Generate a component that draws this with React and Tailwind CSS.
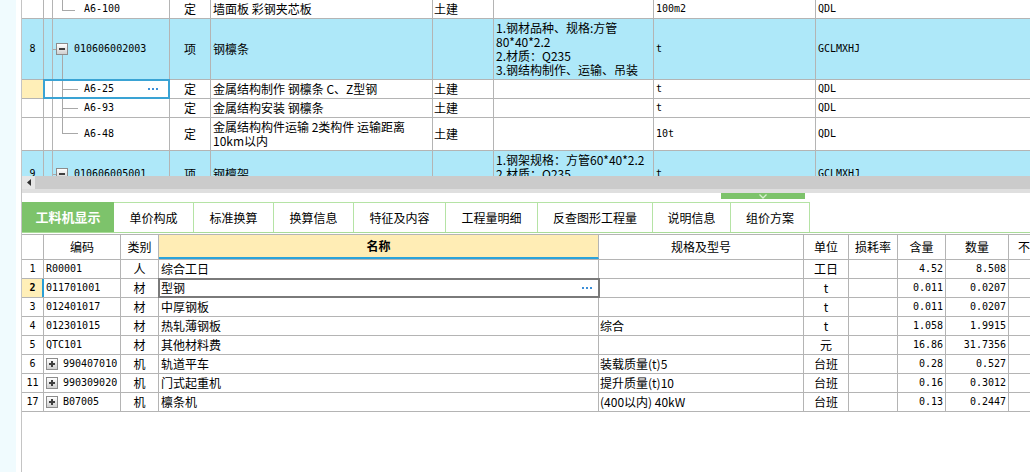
import React from "react";

const G = "border-[#b4b4b4]";
const M = "font-['DejaVu_Sans_Mono',monospace] text-[10px]";

function Dots() {
  return (
    <div className="flex gap-[2px]">
      <div className="w-[2px] h-[2px] bg-[#3c8fd8]" />
      <div className="w-[2px] h-[2px] bg-[#3c8fd8]" />
      <div className="w-[2px] h-[2px] bg-[#3c8fd8]" />
    </div>
  );
}

function Box({ plus, className }) {
  return (
    <div className={`absolute w-[12px] h-[12px] border border-[#8c8c8c] bg-gradient-to-b from-white to-[#d0d0d0] ${className}`}>
      <div className="absolute left-[2px] top-[4px] w-[6px] h-[2px] bg-[#404040]" />
      {plus && <div className="absolute left-[4px] top-[2px] w-[2px] h-[6px] bg-[#404040]" />}
    </div>
  );
}

function TopRow({ h, blue, num, numYellow, tree, type, name, prof, feat, unit, code, sel }) {
  const bg = blue ? "bg-[#aee8f9]" : "bg-white";
  return (
    <div className={`relative flex shrink-0 border-b ${G} ${h} ${bg}`}>
      <div className={`w-[22px] shrink-0 border-r ${G} flex items-center justify-center ${M} ${numYellow ? "bg-[#ffefb8]" : ""}`}>{num}</div>
      <div className={`w-[9px] shrink-0 border-r ${G}`} />
      <div className={`relative w-[117px] shrink-0 border-r ${G}`}>{tree}</div>
      <div className={`w-[41px] shrink-0 border-r ${G} flex items-center justify-center`}>{type}</div>
      <div className={`w-[222px] shrink-0 border-r ${G} flex items-center pl-[2px]`}>{name}</div>
      <div className={`w-[61px] shrink-0 border-r ${G} flex items-center pl-[1px]`}>{prof}</div>
      <div className={`w-[160px] shrink-0 border-r ${G} flex items-center pl-[2px]`}>{feat}</div>
      <div className={`w-[162px] shrink-0 border-r ${G} flex items-center pl-[2px] ${M}`}>{unit}</div>
      <div className={`flex-1 flex items-center pl-[2px] ${M}`}>{code}</div>
      {sel && (
        <div className="absolute left-[21px] top-[-1px] w-[127px] h-[20px] border-2 border-[#3aa3d4] flex items-center justify-end pr-[10px]">
          <Dots />
        </div>
      )}
    </div>
  );
}

const L = "absolute bg-[#a8a8a8]";

function ChildTree({ text, variant }) {
  return (
    <>
      {variant === "last" && <div className={`${L} left-[9px] top-0 w-[1px] h-[15px]`} />}
      {variant === "lastTop" && <div className={`${L} left-[9px] top-0 w-[1px] h-[10px]`} />}
      {variant === "mid" && <div className={`${L} left-[9px] top-0 w-[1px] h-full`} />}
      <div className={`${L} left-[9px] ${variant === "last" ? "top-[15px]" : variant === "lastTop" ? "top-[10px]" : "top-[9px]"} ${variant === "lastTop" ? "w-[13px]" : "w-[16px]"} h-[1px]`} />
      <div className={`absolute left-[31px] top-0 bottom-0 flex items-center ${M}`}>{text}</div>
    </>
  );
}

function ParentTree({ text, boxTop, lineFrom }) {
  return (
    <>
      <div className={`${L} left-0 w-[3px] h-[1px]`} style={{ top: boxTop + 6 }} />
      <div className="absolute left-[3px] w-[12px] h-[12px]" style={{ top: boxTop }}>
        <Box className="left-0 top-0" />
      </div>
      {lineFrom != null && <div className={`${L} left-[9px] w-[1px] bottom-0`} style={{ top: lineFrom }} />}
      <div className={`absolute left-[21px] top-0 bottom-0 flex items-center ${M}`}>{text}</div>
    </>
  );
}

function BotRow({ num, numSel, code, plus, cat, name, spec, unit, qty, amt, edit }) {
  return (
    <div className={`relative flex shrink-0 h-[19px] border-b ${G} bg-white`}>
      <div className={`w-[22px] shrink-0 border-r ${G} flex items-center justify-center ${M} ${numSel ? "bg-[#ffefb8] font-bold" : ""}`}>{num}</div>
      <div className={`relative w-[77px] shrink-0 border-r ${G} flex items-center ${plus ? "pl-[19px]" : "pl-[2px]"} ${M}`}>
        {plus && (
          <div className="absolute left-[2px] top-[3px] w-[12px] h-[12px]">
            <Box plus className="left-0 top-0" />
          </div>
        )}
        {numSel && <div className="absolute left-[-2px] top-0 bottom-0 w-[2px] bg-[#2a9fd6]" />}
        {code}
      </div>
      <div className={`w-[38px] shrink-0 border-r ${G} flex items-center justify-center`}>{cat}</div>
      <div className={`w-[440px] shrink-0 border-r ${G} flex items-center pl-[2px]`}>{name}</div>
      <div className={`w-[205px] shrink-0 border-r ${G} flex items-center pl-[1px]`}>{spec}</div>
      <div className={`w-[45px] shrink-0 border-r ${G} flex items-center justify-center`}>{unit}</div>
      <div className={`w-[49px] shrink-0 border-r ${G}`} />
      <div className={`w-[48px] shrink-0 border-r ${G} flex items-center justify-end pr-[2px] ${M}`}>{qty}</div>
      <div className={`w-[63px] shrink-0 border-r ${G} flex items-center justify-end pr-[2px] ${M}`}>{amt}</div>
      <div className="flex-1" />
      {edit && (
        <div className="absolute left-[136px] top-[-1px] w-[442px] h-[20px] border-2 border-[#7a7a7a] flex items-center justify-end pr-[6px]">
          <Dots />
        </div>
      )}
    </div>
  );
}

const tabs = [
  ["单价构成", "w-[80px]"],
  ["标准换算", "w-[80px]"],
  ["换算信息", "w-[80px]"],
  ["特征及内容", "w-[92px]"],
  ["工程量明细", "w-[92px]"],
  ["反查图形工程量", "w-[115px]"],
  ["说明信息", "w-[78px]"],
  ["组价方案", "w-[79px]"],
];

const rows = [
  { num: "1", code: "R00001", cat: "人", name: "综合工日", spec: "", unit: "工日", qty: "4.52", amt: "8.508" },
  { num: "2", numSel: true, edit: true, code: "011701001", cat: "材", name: "型钢", spec: "", unit: "t", qty: "0.011", amt: "0.0207" },
  { num: "3", code: "012401017", cat: "材", name: "中厚钢板", spec: "", unit: "t", qty: "0.011", amt: "0.0207" },
  { num: "4", code: "012301015", cat: "材", name: "热轧薄钢板", spec: "综合", unit: "t", qty: "1.058", amt: "1.9915" },
  { num: "5", code: "QTC101", cat: "材", name: "其他材料费", spec: "", unit: "元", qty: "16.86", amt: "31.7356" },
  { num: "6", plus: true, code: "990407010", cat: "机", name: "轨道平车", spec: "装载质量(t)5", unit: "台班", qty: "0.28", amt: "0.527" },
  { num: "11", plus: true, code: "990309020", cat: "机", name: "门式起重机", spec: "提升质量(t)10", unit: "台班", qty: "0.16", amt: "0.3012" },
  { num: "17", plus: true, code: "B07005", cat: "机", name: "檩条机", spec: "(400以内) 40kW", unit: "台班", qty: "0.13", amt: "0.2447" },
];

export default function App() {
  return (
    <div className="w-[1030px] h-[472px] overflow-hidden flex bg-white text-[12px] leading-[14px] text-black font-['Noto_Sans_CJK_SC',sans-serif]">
      <div className="w-[16px] shrink-0 bg-[#f0fbfe]" />
      <div className="w-[5px] shrink-0 bg-white" />
      <div className="flex-1 flex flex-col border-l border-[#c4c4c4] min-w-0">
        {/* top table */}
        <div className="h-[176px] shrink-0 overflow-hidden flex flex-col">
          <TopRow
            h="h-[19px]"
            tree={<ChildTree text="A6-100" variant="lastTop" />}
            type="定"
            name="墙面板 彩钢夹芯板"
            prof="土建"
            unit="100m2"
            code="QDL"
          />
          <TopRow
            h="h-[61px]"
            blue
            num="8"
            tree={<ParentTree text="010606002003" boxTop={24} lineFrom={36} />}
            type="项"
            name="钢檩条"
            feat={
              <div>
                1.钢材品种、规格:方管
                <br />
                80*40*2.2
                <br />
                2.材质：Q235
                <br />
                3.钢结构制作、运输、吊装
              </div>
            }
            unit="t"
            code="GCLMXHJ"
          />
          <TopRow
            h="h-[19px]"
            numYellow
            sel
            tree={<ChildTree text="A6-25" variant="mid" />}
            type="定"
            name="金属结构制作 钢檩条 C、Z型钢"
            prof="土建"
            unit="t"
            code="QDL"
          />
          <TopRow
            h="h-[19px]"
            tree={<ChildTree text="A6-93" variant="mid" />}
            type="定"
            name="金属结构安装 钢檩条"
            prof="土建"
            unit="t"
            code="QDL"
          />
          <TopRow
            h="h-[33px]"
            tree={<ChildTree text="A6-48" variant="last" />}
            type="定"
            name={
              <div>
                金属结构构件运输 2类构件 运输距离
                <br />
                10km以内
              </div>
            }
            prof="土建"
            unit="10t"
            code="QDL"
          />
          <TopRow
            h="h-[47px]"
            blue
            num="9"
            tree={<ParentTree text="010606005001" boxTop={17} lineFrom={29} />}
            type="项"
            name="钢檩架"
            feat={
              <div>
                1.钢架规格：方管60*40*2.2
                <br />
                2.材质：Q235
                <br />
                3.钢结构制作、运输、吊装
              </div>
            }
            unit="t"
            code="GCLMXHJ"
          />
        </div>
        {/* scrollbar */}
        <div className="h-[13px] shrink-0 bg-[#cbcbcb] flex">
          <div className="w-[13px] h-full bg-[#e6e6e6] flex items-center justify-center">
            <svg width="4" height="7" viewBox="0 0 4 7">
              <path d="M4 0 L0 3.5 L4 7 Z" fill="#303030" />
            </svg>
          </div>
        </div>
        <div className="h-[4px] shrink-0 bg-[#dfdfdf]" />
        <div className="h-[9px] shrink-0 flex">
          <div className="w-[699px] shrink-0" />
          <div className="w-[84px] h-[6px] bg-[#7dc36b] flex items-center justify-center">
            <svg width="8" height="5" viewBox="0 0 8 5">
              <path d="M0.5 0.5 L4 4 L7.5 0.5" stroke="#d8f0d0" strokeWidth="1.3" fill="none" />
            </svg>
          </div>
        </div>
        {/* tabs */}
        <div className="h-[31px] shrink-0 flex border-b border-[#a9dc98]">
          <div className="w-[92px] shrink-0 bg-[#7dc36b] text-white font-bold text-[13px] flex items-center justify-center">工料机显示</div>
          {tabs.map(([t, w]) => (
            <div key={t} className={`${w} shrink-0 border-t border-r border-[#b5e3a5] flex items-center justify-center`}>
              {t}
            </div>
          ))}
        </div>
        <div className="h-[1px] shrink-0" />
        {/* bottom header */}
        <div className={`h-[26px] shrink-0 flex border-t border-b ${G}`}>
          <div className={`w-[22px] shrink-0 border-r ${G}`} />
          <div className={`w-[77px] shrink-0 border-r ${G} flex items-center justify-center`}>编码</div>
          <div className={`w-[38px] shrink-0 border-r ${G} flex items-center justify-center`}>类别</div>
          <div className={`w-[440px] shrink-0 border-r ${G} bg-[#ffedb5] border-b-2 border-b-[#2ba3da] flex items-center justify-center font-bold`}>名称</div>
          <div className={`w-[205px] shrink-0 border-r ${G} flex items-center justify-center`}>规格及型号</div>
          <div className={`w-[45px] shrink-0 border-r ${G} flex items-center justify-center`}>单位</div>
          <div className={`w-[49px] shrink-0 border-r ${G} flex items-center justify-center`}>损耗率</div>
          <div className={`w-[48px] shrink-0 border-r ${G} flex items-center justify-center`}>含量</div>
          <div className={`w-[63px] shrink-0 border-r ${G} flex items-center justify-center`}>数量</div>
          <div className="flex-1 flex items-center pl-[9px] overflow-hidden whitespace-nowrap">不计</div>
        </div>
        {rows.map((r) => (
          <BotRow key={r.num} {...r} />
        ))}
        <div className="flex-1" />
      </div>
    </div>
  );
}
